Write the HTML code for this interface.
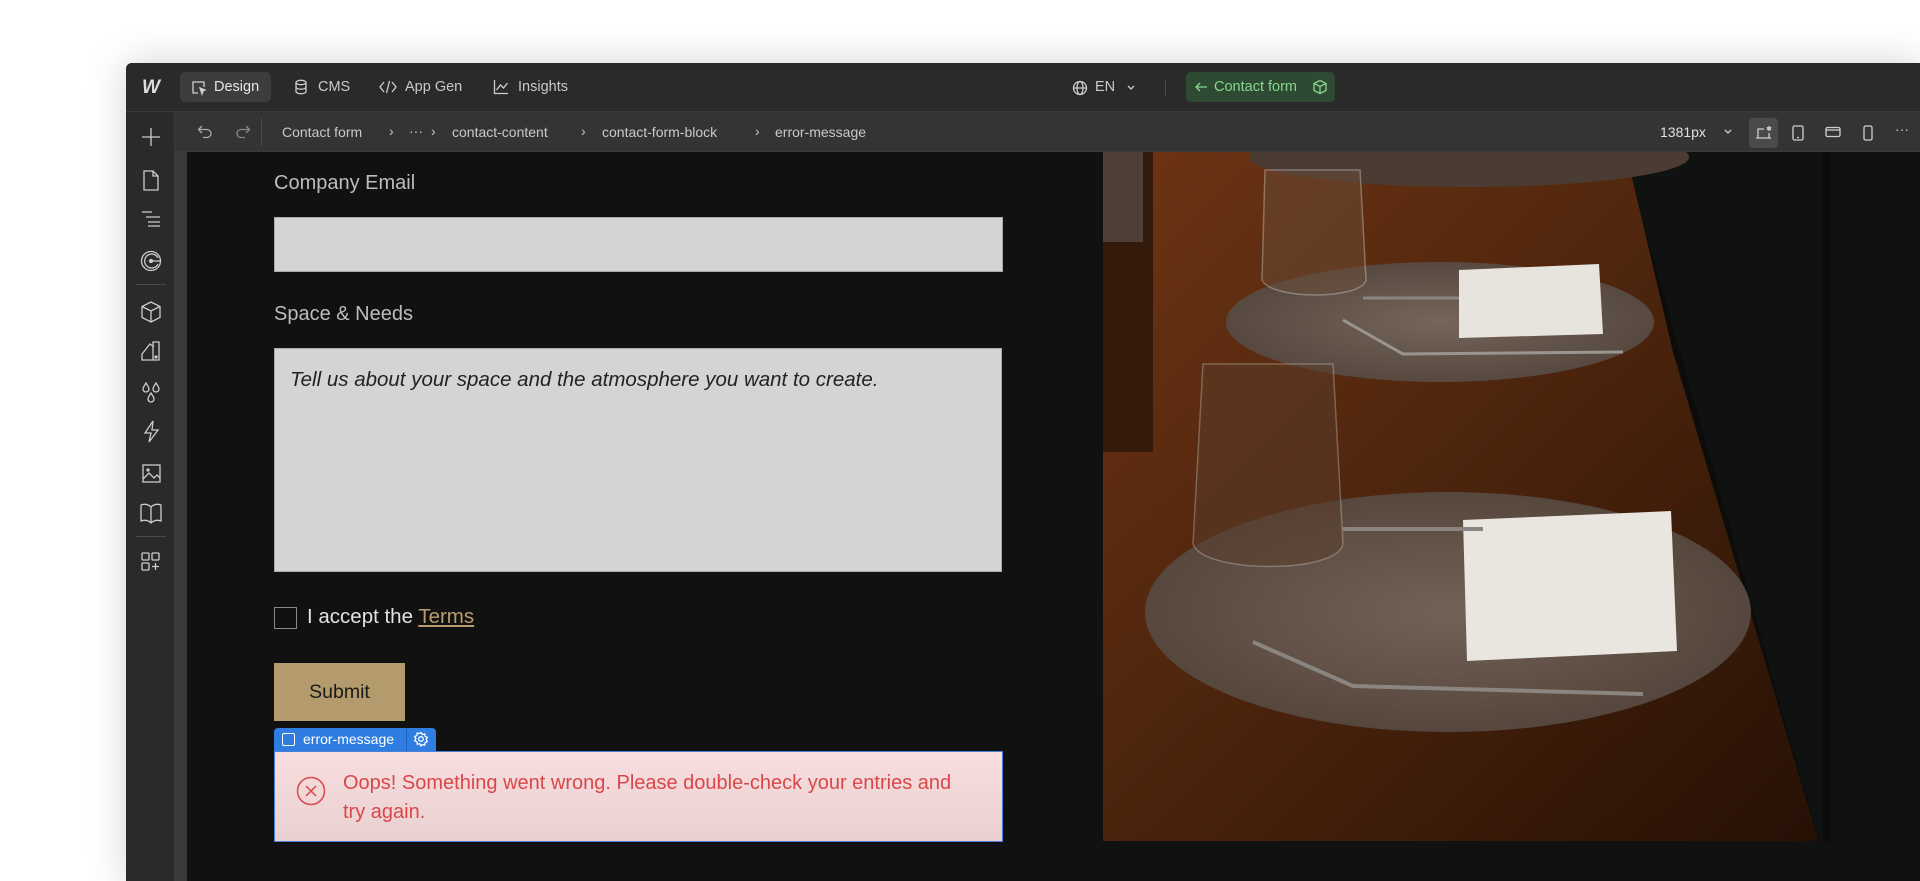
<!DOCTYPE html>
<html><head><meta charset="utf-8"><style>
*{margin:0;padding:0;box-sizing:border-box}
html,body{width:1920px;height:881px;overflow:hidden}
body{background:#fff;font-family:"Liberation Sans",sans-serif;position:relative}
.abs{position:absolute}
.win{left:126px;top:63px;width:1794px;height:818px;background:#111;border-radius:6px 0 0 0;box-shadow:0 0 40px rgba(0,0,0,.18);overflow:hidden}
.top{left:0;top:0;width:1794px;height:49px;background:#2a2a2a;border-bottom:1px solid #3a3a3a}
.crumb{left:49px;top:49px;width:1745px;height:40px;background:#343434;border-bottom:1px solid #3c3c3c}
.side{left:0;top:49px;width:49px;height:769px;background:#2a2a2a;border-right:1px solid #3a3a3a}
.strip{left:49px;top:89px;width:12px;height:729px;background:#3a3a3a}
.t{color:#e6e6e6;font-size:14.5px;white-space:nowrap}
.c{color:#c9c9c9;font-size:14.5px;white-space:nowrap}
svg.i{position:absolute;fill:none;stroke:#cfcfcf;stroke-width:1.3}
</style></head><body>
<div class="abs win">
 <div class="abs top">
  <div class="abs" style="left:16px;top:14px;font:italic 900 19px 'Liberation Sans';color:#ddd;letter-spacing:-3px">W</div>
  <div class="abs" style="left:54px;top:9px;width:91px;height:30px;background:#3d3d3d;border-radius:5px"></div>
  <svg class="i" style="left:65px;top:17px" width="16" height="16"><path d="M13 7V2H2v11h5"/><path d="M9 8l5 2-2 1-1 3z" fill="#cfcfcf"/></svg>
  <div class="abs t" style="left:88px;top:16px">Design</div>
  <svg class="i" style="left:168px;top:16px" width="14" height="16"><ellipse cx="7" cy="3.5" rx="5" ry="2.2"/><path d="M2 3.5v9c0 1.2 2.2 2.2 5 2.2s5-1 5-2.2v-9M2 8c0 1.2 2.2 2.2 5 2.2S12 9.2 12 8"/></svg>
  <div class="abs c" style="left:192px;top:16px">CMS</div>
  <svg class="i" style="left:253px;top:17px" width="18" height="14"><path d="M5 2L1 7l4 5M13 2l4 5-4 5M10.5 1l-3 12"/></svg>
  <div class="abs c" style="left:279px;top:16px">App Gen</div>
  <svg class="i" style="left:367px;top:16px" width="16" height="16"><path d="M1.5 1v13.5H15M3.5 11l4-5 3 3 4-5"/></svg>
  <div class="abs c" style="left:392px;top:16px">Insights</div>
  <svg class="i" style="left:946px;top:17px" width="16" height="16"><circle cx="8" cy="8" r="6.5"/><ellipse cx="8" cy="8" rx="3" ry="6.5"/><path d="M1.5 8h13"/></svg>
  <div class="abs c" style="left:969px;top:16px">EN</div>
  <svg class="i" style="left:1000px;top:21px" width="10" height="8"><path d="M2 2l3 3 3-3"/></svg>
  <div class="abs" style="left:1039px;top:16px;width:1px;height:18px;background:#4a4a4a"></div>
  <div class="abs" style="left:1060px;top:9px;width:149px;height:30px;background:#2f4a32;border-radius:5px"></div>
  <svg class="i" style="left:1068px;top:17px;stroke:#86d68f" width="14" height="14"><path d="M13 7H2M6 3L2 7l4 4"/></svg>
  <div class="abs" style="left:1088px;top:16px;color:#86d68f;font-size:14.5px">Contact form</div>
  <svg class="i" style="left:1186px;top:16px;stroke:#86d68f" width="16" height="16"><path d="M8 1.5l6 3v7l-6 3-6-3v-7zM2 4.5l6 3 6-3M8 7.5v7"/></svg>
 </div>
 <div class="abs crumb">
  <svg class="i" style="left:22px;top:13px;stroke:#aaa" width="16" height="14"><path d="M5 1L1.5 4.5 5 8M1.5 4.5H10a4 4 0 010 8H6"/></svg>
  <svg class="i" style="left:60px;top:13px;stroke:#888" width="16" height="14"><path d="M11 1l3.5 3.5L11 8M14.5 4.5H6a4 4 0 000 8h4"/></svg>
  <div class="abs" style="left:86px;top:6px;width:1px;height:28px;background:#4a4a4a"></div>
  <div class="abs c" style="left:107px;top:12px;font-size:14px">Contact form</div>
  <div class="abs c" style="left:214px;top:11px;font-size:14px">›</div>
  <div class="abs c" style="left:234px;top:11px;font-size:14px">···</div>
  <div class="abs c" style="left:256px;top:11px;font-size:14px">›</div>
  <div class="abs c" style="left:277px;top:12px;font-size:14px">contact-content</div>
  <div class="abs c" style="left:406px;top:11px;font-size:14px">›</div>
  <div class="abs c" style="left:427px;top:12px;font-size:14px">contact-form-block</div>
  <div class="abs c" style="left:580px;top:11px;font-size:14px">›</div>
  <div class="abs c" style="left:600px;top:12px;font-size:14px">error-message</div>
  <div class="abs c" style="left:1485px;top:12px;font-size:14px;color:#e0e0e0">1381px</div>
  <svg class="i" style="left:1548px;top:16px" width="10" height="8"><path d="M2 2l3 3 3-3"/></svg>
  <div class="abs" style="left:1574px;top:6px;width:29px;height:30px;background:#4a4a4a;border-radius:4px"></div>
  <svg class="i" style="left:1579px;top:12px" width="20" height="18"><path d="M2 14h15M4 14V5h6M15 9v5"/><path d="M15 2v5M12.8 3.3l4.4 2.4M12.8 5.7l4.4-2.4"/></svg>
  <svg class="i" style="left:1617px;top:13px" width="12" height="16"><rect x="1" y="1" width="10" height="14" rx="1.5"/><path d="M5 12.5h2"/></svg>
  <svg class="i" style="left:1650px;top:14px" width="16" height="12"><rect x="1" y="1.5" width="14" height="9" rx="1.5"/><path d="M1 4h14"/></svg>
  <svg class="i" style="left:1688px;top:13px" width="10" height="16"><rect x="1" y="1" width="8" height="14" rx="1.5"/></svg>
  <div class="abs c" style="left:1720px;top:9px;font-size:14px">···</div>
 </div>
 <div class="abs side">
  <svg class="i" style="left:14px;top:14px;stroke:#ccc" width="22" height="22"><path d="M11 2v18M2 11h18"/></svg>
  <svg class="i" style="left:16px;top:58px;stroke:#ccc" width="18" height="22"><path d="M2 1h9l5 5v14H2zM11 1v5h5"/></svg>
  <svg class="i" style="left:14px;top:98px;stroke:#ccc" width="22" height="18"><path d="M2 2h10M6 7h14M8 12h12M8 16h12"/></svg>
  <svg class="i" style="left:14px;top:138px;stroke:#ccc" width="22" height="22"><circle cx="11" cy="11" r="9.5"/><path d="M18 8a7 7 0 10 0 6"/><path d="M11 11h9"/><circle cx="11" cy="11" r="1.5" fill="#ccc"/></svg>
  <div class="abs" style="left:10px;top:172px;width:30px;height:1px;background:#4a4a4a"></div>
  <svg class="i" style="left:14px;top:188px;stroke:#ccc" width="22" height="24"><path d="M11 2l9 4.5v11L11 22l-9-4.5v-11zM2 6.5l9 4.5 9-4.5M11 11v11"/></svg>
  <svg class="i" style="left:14px;top:228px;stroke:#ccc" width="22" height="24"><path d="M2 14l8-10 4 3M13 2h6v18h-6zM2 14v6h12"/><circle cx="16" cy="17" r="1" fill="#ccc"/></svg>
  <svg class="i" style="left:14px;top:269px;stroke:#ccc" width="22" height="24"><path d="M6 2c-2 3-3 4.5-3 6a3 3 0 006 0c0-1.5-1-3-3-6zM16 2c-2 3-3 4.5-3 6a3 3 0 006 0c0-1.5-1-3-3-6zM11 12c-2 3-3 4.5-3 6a3 3 0 006 0c0-1.5-1-3-3-6z"/></svg>
  <svg class="i" style="left:15px;top:308px;stroke:#ccc" width="20" height="24"><path d="M12 1L4 13h6l-2 9 9-12h-6z"/></svg>
  <svg class="i" style="left:14px;top:348px;stroke:#ccc" width="22" height="24"><rect x="3" y="5" width="17" height="17"/><path d="M3 19l6-6 5 5 3-3 3 3"/><circle cx="8" cy="10" r="1" fill="#ccc"/></svg>
  <svg class="i" style="left:13px;top:390px;stroke:#ccc" width="24" height="22"><path d="M12 5C9 2 5 2 2 3v16c3-1 7-1 10 2 3-3 7-3 10-2V3c-3-1-7-1-10 2zM12 5v16"/></svg>
  <div class="abs" style="left:10px;top:424px;width:30px;height:1px;background:#4a4a4a"></div>
  <svg class="i" style="left:15px;top:440px;stroke:#ccc" width="20" height="20"><rect x="1" y="1" width="7" height="7" rx="1"/><rect x="11" y="1" width="7" height="7" rx="1"/><rect x="1" y="11" width="7" height="7" rx="1"/><path d="M14.5 11v7M11 14.5h7"/></svg>
 </div>
 <div class="abs strip"></div>
</div>

<div class="abs" style="left:274px;top:172px;color:#bdbdbd;font-size:20px">Company Email</div>
<div class="abs" style="left:274px;top:217px;width:729px;height:55px;background:#d4d4d2;border:1px solid #aaa"></div>
<div class="abs" style="left:274px;top:303px;color:#bdbdbd;font-size:20px">Space &amp; Needs</div>
<div class="abs" style="left:274px;top:348px;width:728px;height:224px;background:#d4d4d2;border:1px solid #aaa"></div>
<div class="abs" style="left:290px;top:368px;color:#222;font-size:20.5px;font-style:italic">Tell us about your space and the atmosphere you want to create.</div>
<div class="abs" style="left:274px;top:607px;width:23px;height:22px;border:1.5px solid #888"></div>
<div class="abs" style="left:307px;top:605px;color:#e2e2e2;font-size:20.5px">I accept the <span style="color:#b99d6e;text-decoration:underline">Terms</span></div>
<div class="abs" style="left:274px;top:663px;width:131px;height:58px;background:#b39b6d;color:#1a1a1a;font-size:19.5px;line-height:58px;text-align:center">Submit</div>
<div class="abs" style="left:274px;top:728px;width:162px;height:23px;background:#2f7de1;border-radius:4px 4px 0 0"></div>
<div class="abs" style="left:282px;top:733px;width:13px;height:13px;border:1.5px solid #fff;border-radius:2px"></div>
<div class="abs" style="left:303px;top:731px;color:#fff;font-size:14px">error-message</div>
<div class="abs" style="left:406px;top:728px;width:1px;height:23px;background:#1e62bd"></div>
<svg class="abs" style="left:413px;top:731px" width="16" height="16" fill="none" stroke="#fff" stroke-width="1.3"><circle cx="8" cy="8" r="2.3"/><path d="M8 1.5l1.4 2 2.4-.6.3 2.4 2.2 1.1-1.2 2.1 1.2 2.1-2.2 1-.3 2.5-2.4-.6L8 15l-1.4-2.4-2.4.6-.3-2.5-2.2-1 1.2-2.1-1.2-2.1 2.2-1.1.3-2.4 2.4.6z"/></svg>
<div class="abs" style="left:274px;top:751px;width:729px;height:91px;background:linear-gradient(#f8dede,#e9d0d1);border:1.5px solid #4a80d8"></div>
<svg class="abs" style="left:296px;top:776px" width="30" height="30" fill="none" stroke="#d9474a" stroke-width="1.5"><circle cx="15" cy="15" r="13.5"/><path d="M10 10l10 10M20 10L10 20"/></svg>
<div class="abs" style="left:343px;top:769px;width:615px;color:#d9474a;font-size:20px;line-height:29px">Oops! Something went wrong. Please double-check your entries and try again.</div>

<svg class="abs" style="left:1103px;top:152px" width="728" height="689" viewBox="0 0 728 689">
 <defs>
  <linearGradient id="wood" x1="0" y1="0" x2="1" y2="1"><stop offset="0" stop-color="#6e3414"/><stop offset=".4" stop-color="#52270e"/><stop offset="1" stop-color="#261005"/></linearGradient>
  <radialGradient id="mat" cx=".5" cy=".5" r=".5"><stop offset="0" stop-color="#75655a"/><stop offset="1" stop-color="#574940"/></radialGradient>
 </defs>
 <rect width="728" height="689" fill="#0c0c0a"/>
 <path d="M520 0h200v689H716z" fill="#0f1210"/>
 <path d="M0 0h523l47 200 146 491H0z" fill="url(#wood)"/>
 <path d="M0 0h50v300H0z" fill="#341a0a"/>
 <path d="M0 0h40v90H0z" fill="#4e4038"/>
 <ellipse cx="366" cy="5" rx="220" ry="30" fill="#4a3c33"/>
 <ellipse cx="337" cy="170" rx="214" ry="60" fill="url(#mat)"/>
 <path d="M356 118l140-6 4 70-144 4z" fill="#e6e4dc"/>
 <path d="M240 168l60 34 220-2" stroke="#9a9590" stroke-width="3" fill="none"/>
 <path d="M260 146h96" stroke="#8a8580" stroke-width="3"/>
 <path d="M162 18h95l6 110c-5 20-95 20-104 0z" fill="#6a4c38" opacity=".5" stroke="#bcb6ae" stroke-width="1.5"/>
 <ellipse cx="345" cy="460" rx="303" ry="120" fill="url(#mat)" opacity=".95"/>
 <path d="M360 368l208-9 6 140-210 10z" fill="#e8e6df"/>
 <path d="M150 490l100 44 290 8" stroke="#8a8580" stroke-width="4" fill="none"/>
 <path d="M240 377h140" stroke="#8a8580" stroke-width="4"/>
 <path d="M100 212h130l10 180c-5 30-140 30-150 0z" fill="#5a3d2a" opacity=".5" stroke="#a8a098" stroke-width="1.5"/>
</svg>
</body></html>
